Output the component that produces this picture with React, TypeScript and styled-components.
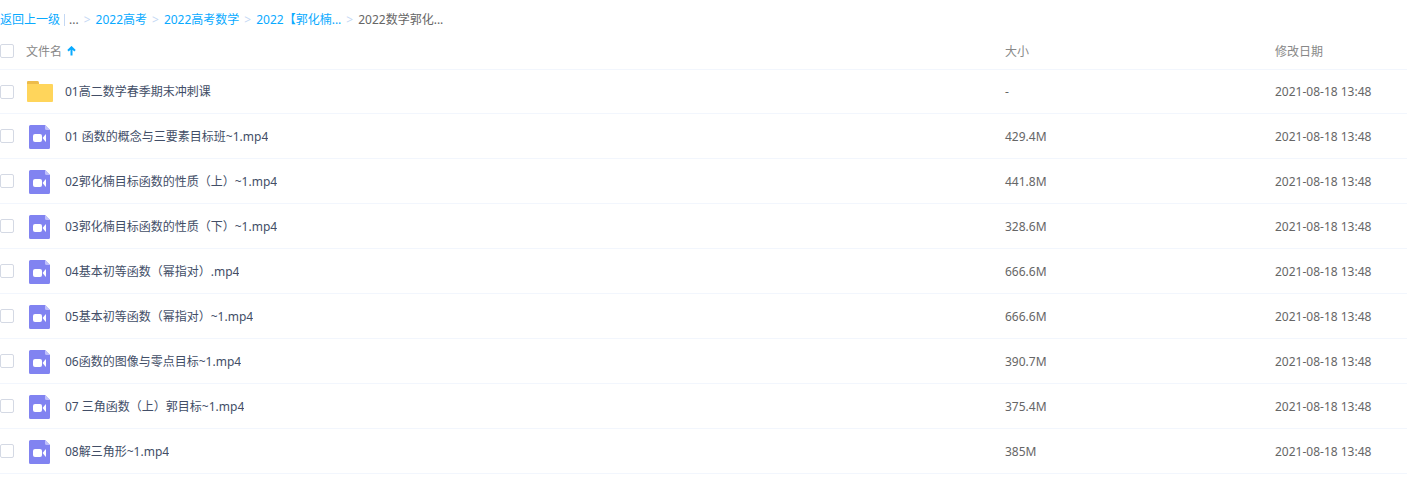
import React, { useState } from "react";
import styled, { createGlobalStyle } from "styled-components";

const GlobalStyle = createGlobalStyle`
  *, *::before, *::after { box-sizing: border-box; }
  body {
    margin: 0;
    background: #fff;
    color: #424e67;
    font: 12px/19px "Noto Sans", "Noto Sans CJK SC", sans-serif;
  }
`;

const Page = styled.main`
  width: 100%;
  padding-top: 10px;
`;

const Breadcrumb = styled.ol`
  display: flex;
  align-items: center;
  gap: 5px;
  margin: 0;
  padding: 0;
  list-style: none;
  white-space: nowrap;
`;

const Crumb = styled.li<{ $gap?: number }>`
  display: flex;
  align-items: center;
  gap: ${({ $gap = 5 }) => $gap}px;
  color: #666;
`;

const CrumbLink = styled.a`
  color: #09aaff;
  text-decoration: none;
`;

const Separator = styled.span`
  color: #c4d8f4;
`;

const BackDivider = styled.span`
  width: 1px;
  height: 12px;
  background: #c4d8f4;
`;

const FileTable = styled.table`
  width: 100%;
  table-layout: fixed;
  border-collapse: separate;
  border-spacing: 0;
`;

const Column = styled.col<{ $width?: number }>`
  width: ${({ $width }) => ($width ? `${$width}px` : "auto")};
`;

const HeaderCell = styled.th`
  height: 41px;
  padding: 4px 0 0;
  border-bottom: 1px solid #f2f6fd;
  color: #888;
  font-weight: 400;
  text-align: left;
`;

const Cell = styled.td<{ $first: boolean }>`
  height: ${({ $first }) => ($first ? 44 : 45)}px;
  padding: 0;
  border-bottom: 1px solid #f2f6fd;
  color: #666;
`;

const NameBox = styled.div`
  display: flex;
  align-items: center;
`;

const Checkbox = styled.input.attrs({ type: "checkbox" })`
  appearance: none;
  flex: none;
  width: 14px;
  height: 14px;
  margin: 0 12px 0 0;
  border: 1px solid #d4d9e4;
  border-radius: 2px;
  background: #fff;
  &:checked {
    border-color: #09aaff;
    background: #09aaff;
  }
`;

const SortButton = styled.button`
  display: flex;
  align-items: center;
  gap: 5px;
  padding: 0;
  border: 0;
  background: none;
  color: inherit;
  font: inherit;
  cursor: pointer;
`;

const FileLink = styled.a`
  margin-left: 11px;
  overflow: hidden;
  color: #424e67;
  text-overflow: ellipsis;
  text-decoration: none;
  white-space: nowrap;
`;

const Icon = styled.svg`
  display: block;
  flex: none;
`;

const FolderIcon = () => (
  <Icon width="28" height="28" viewBox="0 0 28 28" aria-hidden="true">
    <path d="M1 4a1 1 0 0 1 1-1h9.5a1.5 1.5 0 0 1 1.5 1.5V9H1z" fill="#edbc4b" />
    <path d="M1 6h25a1 1 0 0 1 1 1v16a1 1 0 0 1-1 1H2a1 1 0 0 1-1-1z" fill="#ffd55b" />
  </Icon>
);

const VideoIcon = () => (
  <Icon width="28" height="28" viewBox="0 0 28 28" aria-hidden="true">
    <path d="M4.5 3H19l5 5v17.5a1.5 1.5 0 0 1-1.5 1.5h-18A1.5 1.5 0 0 1 3 25.5v-21A1.5 1.5 0 0 1 4.500 3z" fill="#8183f1" />
    <path d="M19 3l5 5h-3.5A1.5 1.5 0 0 1 19 6.500z" fill="#bfc0fa" />
    <rect x="7" y="12" width="9" height="8" rx="2" fill="#fff" />
    <path d="M16.600 16l2.800-3.500q.6-.6.6.3v6.400q0 .9-.6.300z" fill="#fff" />
  </Icon>
);

const SortArrow = () => (
  <Icon width="9" height="10" viewBox="0 0 9 10" aria-hidden="true">
    <path d="M4.500 9.500V1.500M1 4.800l3.500-3.500L8 4.800" fill="none" stroke="#09aaff" strokeWidth="2" />
  </Icon>
);

const crumbs = ["2022高考", "2022高考数学", "2022【郭化楠..."];

const date = "2021-08-18 13:48";
const files = [
  { name: "01高二数学春季期末冲刺课", size: "-", date, folder: true },
  { name: "01 函数的概念与三要素目标班~1.mp4", size: "429.4M", date },
  { name: "02郭化楠目标函数的性质（上）~1.mp4", size: "441.8M", date },
  { name: "03郭化楠目标函数的性质（下）~1.mp4", size: "328.6M", date },
  { name: "04基本初等函数（幂指对）.mp4", size: "666.6M", date },
  { name: "05基本初等函数（幂指对）~1.mp4", size: "666.6M", date },
  { name: "06函数的图像与零点目标~1.mp4", size: "390.7M", date },
  { name: "07 三角函数（上）郭目标~1.mp4", size: "375.4M", date },
  { name: "08解三角形~1.mp4", size: "385M", date },
];

export default function App() {
  const [selected, setSelected] = useState<string[]>([]);
  const allSelected = selected.length === files.length;

  const toggle = (name: string) =>
    setSelected((current) =>
      current.includes(name) ? current.filter((n) => n !== name) : [...current, name]
    );

  return (
    <>
      <GlobalStyle />
      <Page>
        <nav>
          <Breadcrumb>
            <Crumb $gap={4}>
              <CrumbLink href="#">返回上一级</CrumbLink>
              <BackDivider />
              <span>...</span>
            </Crumb>
            {crumbs.map((label) => (
              <Crumb key={label}>
                <Separator>&gt;</Separator>
                <CrumbLink href="#">{label}</CrumbLink>
              </Crumb>
            ))}
            <Crumb>
              <Separator>&gt;</Separator>
              <span>2022数学郭化...</span>
            </Crumb>
          </Breadcrumb>
        </nav>
        <FileTable>
          <colgroup>
            <Column />
            <Column $width={270} />
            <Column $width={132} />
          </colgroup>
          <thead>
            <tr>
              <HeaderCell scope="col">
                <NameBox>
                  <Checkbox
                    aria-label="全选"
                    checked={allSelected}
                    onChange={() => setSelected(allSelected ? [] : files.map((f) => f.name))}
                  />
                  <SortButton type="button">
                    文件名
                    <SortArrow />
                  </SortButton>
                </NameBox>
              </HeaderCell>
              <HeaderCell scope="col">大小</HeaderCell>
              <HeaderCell scope="col">修改日期</HeaderCell>
            </tr>
          </thead>
          <tbody>
            {files.map((file, index) => (
              <tr key={file.name}>
                <Cell $first={index === 0}>
                  <NameBox>
                    <Checkbox
                      aria-label={file.name}
                      checked={selected.includes(file.name)}
                      onChange={() => toggle(file.name)}
                    />
                    {file.folder ? <FolderIcon /> : <VideoIcon />}
                    <FileLink href="#">{file.name}</FileLink>
                  </NameBox>
                </Cell>
                <Cell $first={index === 0}>{file.size}</Cell>
                <Cell $first={index === 0}>{file.date}</Cell>
              </tr>
            ))}
          </tbody>
        </FileTable>
      </Page>
    </>
  );
}
